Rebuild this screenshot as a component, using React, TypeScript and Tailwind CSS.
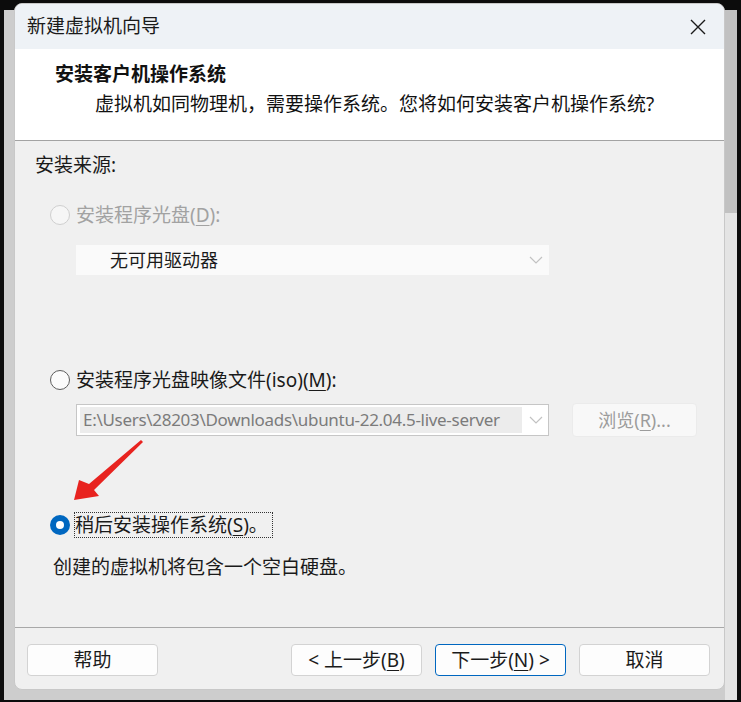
import React from "react";

const font = "font-['Noto_Sans','Noto_Sans_CJK_SC',sans-serif]";

function Radio({ state }: { state: "disabled" | "off" | "on" }) {
  if (state === "on") {
    return (
      <span className="flex h-[20px] w-[20px] shrink-0 items-center justify-center rounded-full bg-[#0067c0]">
        <span className="h-[8px] w-[8px] rounded-full bg-white" />
      </span>
    );
  }
  return (
    <span
      className={
        state === "disabled"
          ? "h-[20px] w-[20px] shrink-0 rounded-full border border-[#cfcfcf] bg-[#f6f6f6]"
          : "h-[20px] w-[20px] shrink-0 rounded-full border border-[#5d5d5d] bg-[#fbfbfb]"
      }
    />
  );
}

function Chevron() {
  return (
    <svg width="14" height="8" viewBox="0 0 14 8" className="shrink-0">
      <path d="M1 1 L7 7 L13 1" fill="none" stroke="#c2c2c2" strokeWidth="1.2" />
    </svg>
  );
}

function FooterButton({ children, primary }: { children: React.ReactNode; primary?: boolean }) {
  return (
    <div
      className={`flex h-[32px] w-[131px] items-center justify-center rounded-[4px] border bg-[#fdfdfd] text-[19px] text-[#1b1b1b] ${
        primary ? "border-[#0067c0]" : "border-[#d3d3d3]"
      }`}
    >
      {children}
    </div>
  );
}

export default function App() {
  return (
    <div className={`relative h-[702px] w-[741px] overflow-hidden bg-[#0c0c0c] ${font}`}>
      {/* window behind the wizard */}
      <div className="absolute left-[4px] top-[10px] flex h-[690px] w-[733px] justify-end bg-[#cdcdcd]">
        <div className="flex w-[12px] flex-col">
          <div className="h-[203px] bg-[#c1c1c1]" />
          <div className="flex-1 bg-[#e4e4e4]" />
        </div>
      </div>

      {/* wizard dialog */}
      <div className="absolute left-[14px] top-[3px] flex h-[687px] w-[711px] flex-col overflow-hidden rounded-[8px] border border-[#c8c8c8] bg-[#f0f0f0]">
        {/* title bar */}
        <div className="flex h-[45px] shrink-0 items-center justify-between bg-[#eef2f6] pl-[12px] pr-[18px]">
          <span className="text-[19px] text-[#1a1a1a]">新建虚拟机向导</span>
          <svg width="16" height="16" viewBox="0 0 16 16">
            <path d="M1 1 L15 15 M15 1 L1 15" stroke="#1a1a1a" strokeWidth="1.4" />
          </svg>
        </div>

        {/* header */}
        <div className="flex h-[92px] shrink-0 flex-col border-b border-[#a3a3a3] bg-white pl-[40px] pt-[12px]">
          <div className="text-[19px] font-bold leading-[26px] text-[#111]">安装客户机操作系统</div>
          <div className="mt-[4px] pl-[40px] text-[19px] leading-[26px] text-[#111]">
            虚拟机如同物理机，需要操作系统。您将如何安装客户机操作系统?
          </div>
        </div>

        {/* body */}
        <div className="flex flex-1 flex-col text-[19px] text-[#1a1a1a]">
          <div className="mt-[12px] pl-[20px] leading-[24px]">安装来源:</div>

          <div className="mt-[26px] flex items-center gap-[6px] pl-[35px] leading-[24px] text-[#a2a2a2]">
            <Radio state="disabled" />
            <span>
              安装程序光盘(<span className="underline underline-offset-[3px]">D</span>):
            </span>
          </div>

          <div className="ml-[61px] mt-[18px] flex h-[30px] w-[473px] items-center justify-between bg-[#fafafa] pl-[34px] pr-[6px]">
            <span className="text-[18px] leading-[24px]">无可用驱动器</span>
            <Chevron />
          </div>

          <div className="mt-[93px] flex items-center gap-[6px] pl-[35px] leading-[24px]">
            <Radio state="off" />
            <span>
              安装程序光盘映像文件(iso)(<span className="underline underline-offset-[3px]">M</span>):
            </span>
          </div>

          <div className="ml-[61px] mt-[11px] flex h-[34px] items-center">
            <div className="flex h-[32px] w-[473px] items-center border border-[#c6c6c6] bg-white pl-[3px] pr-[5px]">
              <div className="w-[442px] whitespace-nowrap bg-[#ececec] pl-[3px] text-[17px] leading-[26px] tracking-[-0.3px] text-[#7b7b7b]">
                E:\Users\28203\Downloads\ubuntu-22.04.5-live-server
              </div>
              <div className="flex flex-1 justify-end">
                <Chevron />
              </div>
            </div>
            <div className="ml-[23px] flex h-[34px] w-[125px] items-center justify-center rounded-[4px] border border-[#ebebeb] bg-[#f8f8f8] text-[18px] text-[#9c9c9c]">
              浏览(<span className="underline underline-offset-[3px]">R</span>)...
            </div>
          </div>

          <div className="mt-[75px] flex items-center gap-[4px] pl-[35px] leading-[24px]">
            <Radio state="on" />
            <span className="border border-dotted border-[#333] pr-[4px]">
              稍后安装操作系统(<span className="underline underline-offset-[3px]">S</span>)。
            </span>
          </div>

          <div className="mt-[17px] pl-[38px] leading-[24px]">创建的虚拟机将包含一个空白硬盘。</div>
        </div>

        {/* footer */}
        <div className="flex h-[62px] shrink-0 items-center border-t border-[#a8a8a8] pl-[12px] pr-[14px] pt-[3px]">
          <FooterButton>帮助</FooterButton>
          <div className="ml-auto flex gap-[13px]">
            <FooterButton>
              &lt; 上一步(<span className="underline underline-offset-[3px]">B</span>)
            </FooterButton>
            <FooterButton primary>
              下一步(<span className="underline underline-offset-[3px]">N</span>) &gt;
            </FooterButton>
            <FooterButton>取消</FooterButton>
          </div>
        </div>
      </div>

      {/* red annotation arrow */}
      <svg className="pointer-events-none absolute left-0 top-0" width="741" height="702">
        <polygon
          points="74,500 79,480 89,484 141,440 143,442 94,490 99,496"
          fill="#e8231f"
        />
      </svg>
    </div>
  );
}
